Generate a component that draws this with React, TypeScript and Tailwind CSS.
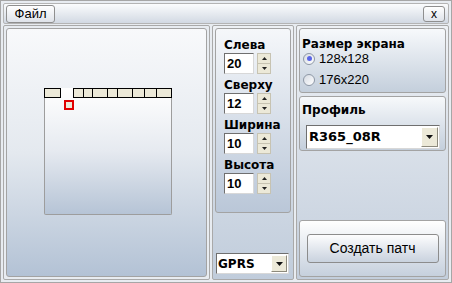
import React from 'react';

const font = "font-['Liberation_Sans',Arial,sans-serif]";
const boldFont = "font-['DejaVu_Sans',Verdana,sans-serif] font-bold";

// boxes across the top of the preview, x and width relative to the screen
const topBoxes: [number, number][] = [
  [0, 17],
  [29, 11],
  [39, 10],
  [48, 16],
  [63, 11],
  [73, 16],
  [88, 13],
  [100, 13],
  [112, 16],
];

const SpinField: React.FC<{ label: string; value: string }> = ({ label, value }) => (
  <div className="flex flex-col">
    <div className={`h-[16px] text-[12px] leading-[16px] text-black ${boldFont}`}>{label}</div>
    <div className="flex items-center gap-[3px]">
      <div className="w-[30px] h-[21px] bg-white border border-t-[#6f6f6f] border-l-[#6f6f6f] border-r-[#d8d8d8] border-b-[#d8d8d8] flex items-center pl-[2px] text-[13px] font-bold text-black">
        {value}
      </div>
      <div className="flex flex-col w-[14px] h-[21px]">
        <div className="flex-1 bg-[#ece9d8] border border-[#c7c3b2] border-b-0 flex items-center justify-center">
          <svg width="5" height="3" viewBox="0 0 5 3"><path d="M2.5 0 L5 3 L0 3 Z" fill="#222" /></svg>
        </div>
        <div className="flex-1 bg-[#ece9d8] border border-[#c7c3b2] flex items-center justify-center">
          <svg width="5" height="3" viewBox="0 0 5 3"><path d="M0 0 L5 0 L2.5 3 Z" fill="#222" /></svg>
        </div>
      </div>
    </div>
  </div>
);

const DropArrow: React.FC<{ className?: string }> = ({ className }) => (
  <div className={`bg-[#ece9d8] border border-t-white border-l-white border-r-[#8d8a7c] border-b-[#8d8a7c] flex items-center justify-center ${className ?? ''}`}>
    <svg width="7" height="4" viewBox="0 0 7 4"><path d="M0 0 L7 0 L3.5 4 Z" fill="#111" /></svg>
  </div>
);

const Radio: React.FC<{ checked?: boolean; label: string }> = ({ checked, label }) => (
  <div className="flex items-center gap-[4px] h-[13px]">
    <div className="w-[12px] h-[12px] rounded-full border border-[#8e98a6] bg-gradient-to-br from-[#d6dbe3] to-white flex items-center justify-center">
      {checked && <div className="w-[5px] h-[5px] rounded-full bg-[#5a66e6]" />}
    </div>
    <span className="text-[13px] text-black leading-none">{label}</span>
  </div>
);

export default function App() {
  return (
    <div className={`w-[452px] h-[283px] bg-[#e8ecf1] border border-[#a6a6a6] p-[2px] flex flex-col gap-[1px] ${font}`}>
      {/* top bar */}
      <div className="h-[21px] shrink-0 flex items-center justify-between pl-[2px] pr-[3px] border border-[#b4b4b4] rounded-[2px] bg-gradient-to-b from-[#fbfcfd] to-[#d2d9e3]">
        <button className="w-[49px] h-[18px] rounded-[3px] border border-[#8f8f8f] bg-gradient-to-b from-white to-[#dfe3ea] text-[13px] leading-none text-black">
          Файл
        </button>
        <button className="w-[22px] h-[16px] rounded-[3px] border border-[#8f8f8f] bg-gradient-to-b from-white to-[#dfe3ea] text-[12px] leading-none text-black">
          x
        </button>
      </div>

      {/* main area */}
      <div className="flex-1 flex gap-[2px]">
        {/* preview panel */}
        <div className="w-[207px] border border-[#a9a9a9] rounded-[2px] p-[2px] bg-[#e8ecf1]">
          <div className="h-full border border-[#a3a3a3] rounded-[3px] bg-gradient-to-b from-[#f8f9fb] via-[#e4e9ef] to-[#b3c2d5] pl-[37px] pt-[59px]">
            <div className="relative w-[128px] h-[127px] border-x border-b border-[#9d9d9d] rounded-b-[2px] bg-gradient-to-b from-white via-[#e6eaf0] to-[#b6c4d6]">
              {topBoxes.map(([x, w]) => (
                <div
                  key={x}
                  className="absolute top-0 h-[10px] bg-[#ece9d8] border border-black"
                  style={{ left: x - 1, width: w }}
                />
              ))}
              <div className="absolute left-[19px] top-[12px] w-[10px] h-[10px] bg-[#ece9d8] border-2 border-[#e00000]" />
            </div>
          </div>
        </div>

        {/* position column */}
        <div className="w-[82px] border border-[#a9a9a9] rounded-[2px] p-[2px] flex flex-col justify-between bg-gradient-to-b from-[#eef1f5] to-[#c0ccdb]">
          <div className="h-[185px] border border-[#a3a3a3] rounded-[3px] bg-gradient-to-b from-[#f5f7fa] to-[#bac7d8] pl-[8px] pt-[8px] flex flex-col gap-[3px]">
            <SpinField label="Слева" value="20" />
            <SpinField label="Сверху" value="12" />
            <SpinField label="Ширина" value="10" />
            <SpinField label="Высота" value="10" />
          </div>
          <div className="h-[21px] mb-[3px] ml-[1px] w-[73px] bg-white border border-t-[#6f6f6f] border-l-[#6f6f6f] border-r-[#d8d8d8] border-b-[#d8d8d8] flex items-center justify-between pl-[1px] pr-[1px]">
            <span className={`text-[12px] text-black ${boldFont}`}>GPRS</span>
            <DropArrow className="w-[16px] h-[17px]" />
          </div>
        </div>

        {/* settings column */}
        <div className="flex-1 border border-[#a9a9a9] rounded-[2px] p-[2px] flex flex-col bg-gradient-to-b from-[#eef1f5] to-[#c3cedc]">
          <div className="h-[65px] border border-[#a3a3a3] rounded-[3px] bg-gradient-to-b from-[#f7f9fb] to-[#c4cfdc] pl-[2px] pt-[8px] flex flex-col">
            <div className={`text-[12px] leading-[14px] text-black ${boldFont}`}>Размер экрана</div>
            <div className="mt-[1px] ml-[1px] flex flex-col gap-[8px]">
              <Radio checked label="128x128" />
              <Radio label="176x220" />
            </div>
          </div>
          <div className="mt-[3px] h-[55px] border border-[#a3a3a3] rounded-[3px] bg-gradient-to-b from-[#f7f9fb] to-[#c4cfdc] pl-[2px] pt-[6px] flex flex-col">
            <div className={`text-[12px] leading-[14px] text-black ${boldFont}`}>Профиль</div>
            <div className="mt-[8px] ml-[4px] w-[134px] h-[24px] bg-white border border-t-[#6f6f6f] border-l-[#6f6f6f] border-r-[#d8d8d8] border-b-[#d8d8d8] flex items-center justify-between pl-[2px] pr-[1px]">
              <span className={`text-[13px] text-black ${boldFont}`}>R365_08R</span>
              <DropArrow className="w-[17px] h-[20px]" />
            </div>
          </div>
          <div className="flex-1" />
          <div className="h-[57px] border border-[#a3a3a3] rounded-[3px] bg-gradient-to-b from-white to-[#c6d0dd] flex items-center justify-center">
            <button className="w-[132px] h-[29px] rounded-[3px] border border-[#8c8c8c] bg-gradient-to-b from-[#fdfdfe] to-[#c9d2de] text-[14px] text-black">
              Создать патч
            </button>
          </div>
        </div>
      </div>
    </div>
  );
}
